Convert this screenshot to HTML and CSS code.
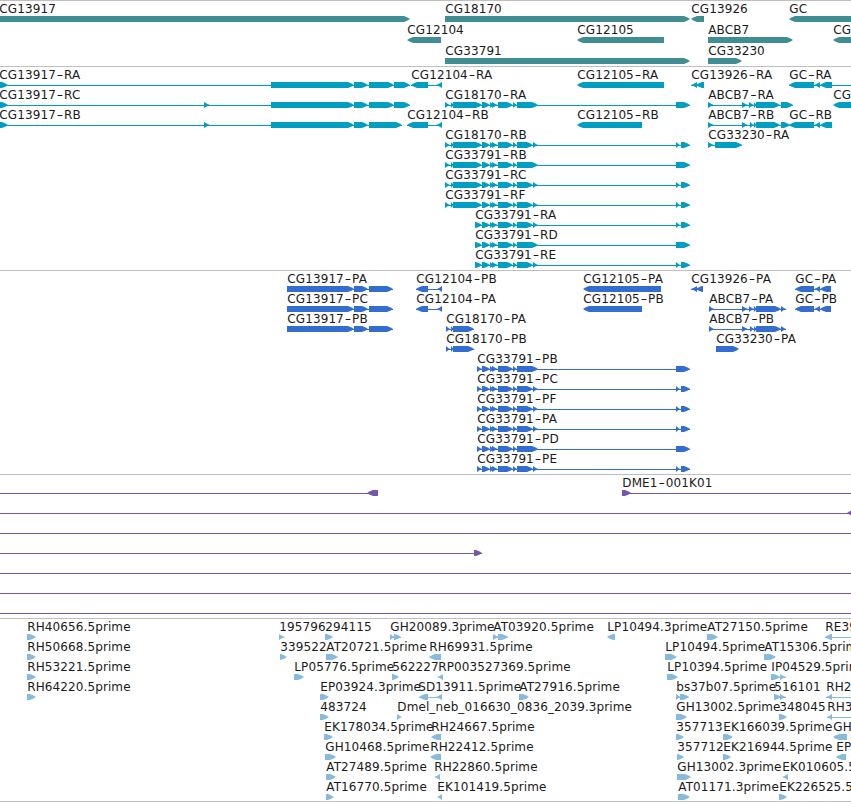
FILE: index.html
```
<!DOCTYPE html>
<html lang="en">
<head>
  <meta charset="UTF-8">
  <title>Genome Browser</title>
  <link rel="stylesheet" href="styles.css">
</head>
<body>

<main class="browser">
  <svg class="track genes" id="genes" height="65"></svg>
  <svg class="track transcripts" id="transcripts" height="203"></svg>
  <svg class="track proteins" id="proteins" height="203"></svg>
  <svg class="track bacs" id="bacs" height="143"></svg>
  <svg class="track ests" id="ests" height="182"></svg>
</main>

<script src="tracks.js"></script>
</body>
</html>
```
FILE: styles.css
```
body {
  margin: 0;
  background: #fff;
  overflow: hidden;
}
.browser {
  display: flex;
  flex-direction: column;
  border-bottom: 1px solid #bfbfbf;
}
.track {
  display: block;
  width: 100%;
  flex: none;
  border-top: 1px solid #bfbfbf;
  overflow: hidden;
}
.track text {
  font-family: "DejaVu Sans", sans-serif;
  font-size: 12px;
  letter-spacing: 0.1px;
  fill: #1a1a1a;
  white-space: pre;
}
.track line {
  stroke: currentColor;
  stroke-width: 1;
}
.track polygon { fill: currentColor; }
.genes { color: #408e93; }
.transcripts { color: #009fc1; }
.proteins { color: #326dcf; }
.bacs { color: #7358aa; }
.ests { color: #87bbdd; }
```
FILE: tracks.js
```
// Each feature: [row, label, direction, segments, label x (optional)]
// Segments are flat start/end pairs, joined by a thin line.

const exons = [498, 513, 513, 517];
const split = [490, 494, 492, 498, ...exons, 517, 533, 533, 538, 676, 680, 681, 690];
const merged = [490, 494, 492, 498, ...exons, 517, 538, 676, 690];
const head = [445, 450, 451, 454, 453, 482, 482, 490];
const shortHead = [475, 482, 482, 490];
const protHead = [477, 482, 482, 490];

const genes = [
  [0, 'CG13917', 1, [-9, 410], -1],
  [0, 'CG18170', 1, [445, 690]],
  [0, 'CG13926', -1, [691, 704]],
  [0, 'GC', -1, [789, 870]],
  [1, 'CG12104', -1, [407, 441]],
  [1, 'CG12105', -1, [577, 664]],
  [1, 'ABCB7', 1, [708, 793]],
  [1, 'CG', -1, [833, 870]],
  [2, 'CG33791', 1, [445, 690]],
  [2, 'CG33230', 1, [708, 742]]
];

const transcripts = [
  [0, 'CG13917-RA', 1, [0, 8, 271, 354, 354, 368, 369, 394, 394, 410], -1],
  [0, 'CG12104-RA', -1, [411, 428, 436, 442]],
  [0, 'CG12105-RA', -1, [577, 664]],
  [0, 'CG13926-RA', -1, [691, 697, 696, 704]],
  [0, 'GC-RA', -1, [789, 814, 814, 820, 820, 832, 890, 900]],
  [1, 'CG13917-RC', 1, [0, 8, 204, 210, 271, 354, 354, 368, 369, 394, 394, 410], -1],
  [1, 'CG18170-RA', 1, [...head, ...merged]],
  [1, 'ABCB7-RA', 1, [708, 714, 742, 748, 749, 754, 754, 757, 756, 780, 781, 793]],
  [1, 'CG', -1, [833, 870]],
  [2, 'CG13917-RB', 1, [0, 8, 204, 210, 271, 354, 354, 368, 369, 402], -1],
  [2, 'CG12104-RB', -1, [407, 428, 436, 442]],
  [2, 'CG12105-RB', -1, [577, 642]],
  [2, 'ABCB7-RB', 1, [708, 714, 742, 748, 750, 754, 754, 757, 756, 780, 781, 790]],
  [2, 'GC-RB', -1, [789, 814, 814, 820, 820, 832]],
  [3, 'CG18170-RB', 1, [...head, ...split]],
  [3, 'CG33230-RA', 1, [708, 714, 715, 742]],
  [4, 'CG33791-RB', 1, [...head, ...merged]],
  [5, 'CG33791-RC', 1, [...head, ...split]],
  [6, 'CG33791-RF', 1, [...head, ...split]],
  [7, 'CG33791-RA', 1, [...shortHead, ...split]],
  [8, 'CG33791-RD', 1, [...shortHead, ...merged]],
  [9, 'CG33791-RE', 1, [...shortHead, ...split]]
];

const proteins = [
  [0, 'CG13917-PA', 1, [287, 354, 354, 368, 369, 393]],
  [0, 'CG12104-PB', -1, [416, 428, 437, 442]],
  [0, 'CG12105-PA', -1, [583, 661]],
  [0, 'CG13926-PA', -1, [691, 697, 696, 703]],
  [0, 'GC-PA', -1, [795, 814, 814, 820, 820, 831]],
  [1, 'CG13917-PC', 1, [287, 354, 354, 368, 369, 393]],
  [1, 'CG12104-PA', -1, [416, 428, 437, 442]],
  [1, 'CG12105-PB', -1, [583, 642]],
  [1, 'ABCB7-PA', 1, [709, 714, 742, 748, 749, 754, 754, 757, 756, 781, 781, 786]],
  [1, 'GC-PB', -1, [795, 814, 814, 820, 820, 831]],
  [2, 'CG13917-PB', 1, [287, 354, 354, 368, 369, 393]],
  [2, 'CG18170-PA', 1, [446, 450, 451, 454, 453, 474]],
  [2, 'ABCB7-PB', 1, [709, 714, 742, 748, 750, 754, 754, 757, 756, 781, 781, 786]],
  [3, 'CG18170-PB', 1, [446, 450, 451, 454, 453, 474]],
  [3, 'CG33230-PA', 1, [716, 739]],
  [4, 'CG33791-PB', 1, [...protHead, ...merged]],
  [5, 'CG33791-PC', 1, [...protHead, ...split]],
  [6, 'CG33791-PF', 1, [...protHead, ...split]],
  [7, 'CG33791-PA', 1, [...protHead, ...split]],
  [8, 'CG33791-PD', 1, [...protHead, ...merged]],
  [9, 'CG33791-PE', 1, [...protHead, ...split]]
];

const bacs = [
  [0, '', -1, [-20, -10, 367, 378]],
  [0, 'DME1-001K01', 1, [622, 631, 890, 900]],
  [1, '', -1, [-20, -10, 847, 860]],
  [2, '', 1, [-20, -10, 890, 900]],
  [3, '', 1, [-20, -10, 474, 482]],
  [4, '', 1, [-20, -10, 890, 900]],
  [5, '', 1, [-20, -10, 890, 900]],
  [6, '', 1, [-20, -10, 890, 900]]
];

const ests = [
  [0, 'RH40656.5prime', 1, [27, 36]],
  [0, '195796', 1, [279, 285]],
  [0, '294115', 1, [325, 333]],
  [0, 'GH20089.3prime', 1, [390, 395, 394, 401]],
  [0, 'AT03920.5prime', 1, [493, 499, 498, 508]],
  [0, 'LP10494.3prime', -1, [607, 615]],
  [0, 'AT27150.5prime', 1, [707, 718]],
  [0, 'RE39', -1, [825, 832, 890, 900]],
  [1, 'RH50668.5prime', 1, [27, 36]],
  [1, '339522', 1, [280, 287]],
  [1, 'AT20721.5prime', 1, [326, 338]],
  [1, 'RH69931.5prime', -1, [429, 441]],
  [1, 'LP10494.5prime', 1, [665, 677]],
  [1, 'AT15306.5prime', 1, [764, 776]],
  [2, 'RH53221.5prime', 1, [27, 36]],
  [2, 'LP05776.5prime', 1, [294, 304]],
  [2, '562227', 1, [392, 399]],
  [2, 'RP003527369.5prime', -1, [437, 443], 438],
  [2, 'LP10394.5prime', 1, [667, 678]],
  [2, 'IP04529.5prime', 1, [771, 780, 780, 786]],
  [3, 'RH64220.5prime', 1, [27, 36]],
  [3, 'EP03924.3prime', 1, [320, 329]],
  [3, 'SD13911.5prime', -1, [419, 428, 436, 442], 418],
  [3, 'AT27916.5prime', 1, [519, 529]],
  [3, 'bs37b07.5prime', 1, [676, 681, 680, 689]],
  [3, '516101', 1, [774, 781, 780, 786]],
  [3, 'RH2', -1, [826, 832, 890, 900]],
  [4, '483724', 1, [320, 329]],
  [4, 'Dmel_neb_016630_0836_2039.3prime', 1, [397, 402]],
  [4, 'GH13002.5prime', 1, [676, 687]],
  [4, '348045', 1, [779, 787]],
  [4, 'RH3', -1, [827, 832, 890, 900]],
  [5, 'EK178034.5prime', 1, [324, 333]],
  [5, 'RH24667.5prime', -1, [431, 441]],
  [5, '357713', 1, [676, 684]],
  [5, 'EK166039.5prime', 1, [723, 733]],
  [5, 'GH', -1, [833, 847]],
  [6, 'GH10468.5prime', 1, [325, 336]],
  [6, 'RH22412.5prime', -1, [430, 441]],
  [6, '357712', 1, [677, 684]],
  [6, 'EK216944.5prime', 1, [723, 731]],
  [6, 'EP', -1, [836, 846]],
  [7, 'AT27489.5prime', 1, [326, 336]],
  [7, 'RH22860.5prime', -1, [434, 440]],
  [7, 'GH13002.3prime', 1, [677, 691]],
  [7, 'EK010605.5', -1, [782, 788]],
  [8, 'AT16770.5prime', 1, [326, 334]],
  [8, 'EK101419.5prime', -1, [437, 442]],
  [8, 'AT01171.3prime', 1, [678, 690]],
  [8, 'EK226525.5', 1, [779, 787]]
];

// Box with a rounded-off tip; short segments are plain triangles
function arrow(x1, x2, y, dir) {
  const tip = Math.min(6, x2 - x1);
  const from = dir > 0 ? x1 : x2;
  const to = dir > 0 ? x2 : x1;
  const neck = to - dir * tip;
  const mid = to - dir * tip * 0.4;
  const bulge = x2 - x1 > 6 ? 1.4 : 1.9;
  return `<polygon points="${from},${y} ${neck},${y} ${mid},${y + bulge} ${to},${y + 3} ${mid},${y + 6 - bulge} ${neck},${y + 6} ${from},${y + 6}"/>`;
}

function label(x, y, text) {
  const parts = text.split('-');
  const body = parts.length > 1
    ? `${parts[0]}<tspan dx="1" textLength="6.6" lengthAdjust="spacingAndGlyphs">-</tspan><tspan dx="0.6">${parts[1]}</tspan>`
    : text;
  return `<text x="${x + 0.3}" y="${y}">${body}</text>`;
}

function drawTrack(id, features, pitch, base) {
  let out = '';
  for (const [row, name, dir, segs, lx] of features) {
    const y = base + row * pitch;
    if (segs.length > 2) {
      out += `<line x1="${segs[0]}" y1="${y + 6.5}" x2="${segs[segs.length - 1]}" y2="${y + 6.5}"/>`;
    }
    for (let i = 0; i < segs.length; i += 2) {
      out += arrow(segs[i], segs[i + 1], y + 3, dir);
    }
    if (name) out += label(lx === undefined ? segs[0] : lx, y, name);
  }
  document.getElementById(id).innerHTML = out;
}

// base = baseline of the first label inside the track
drawTrack('genes', genes, 21, 12);
drawTrack('transcripts', transcripts, 20, 12);
drawTrack('proteins', proteins, 20, 12);
drawTrack('bacs', bacs, 20, 12);
drawTrack('ests', ests, 20, 12);
```
